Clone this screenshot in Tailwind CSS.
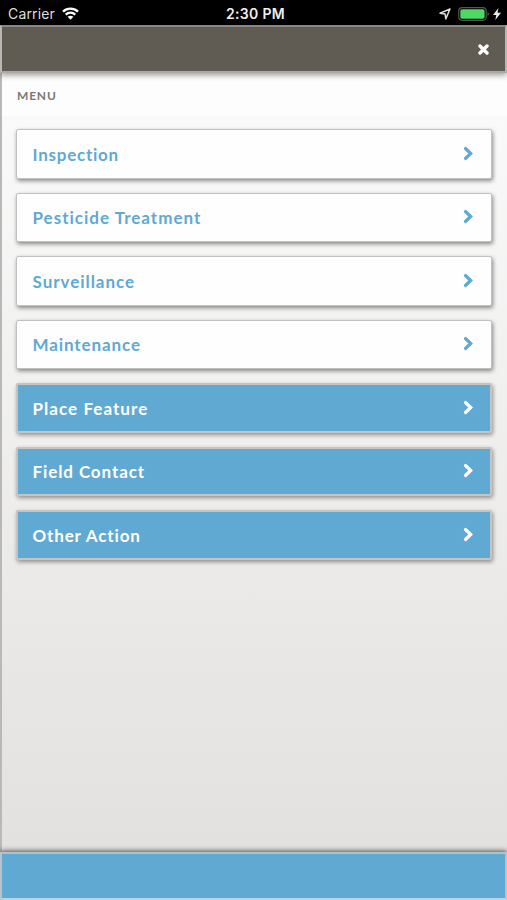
<!DOCTYPE html>
<html lang="en">
<head>
<meta charset="utf-8">
<title>Menu</title>
<script src="https://cdn.jsdelivr.net/npm/@tailwindcss/browser@4"></script>
</head>
<body class="w-[507px] h-[900px] overflow-hidden flex flex-col bg-black font-['Lato',sans-serif]">
<div class="h-[25px] shrink-0 grid grid-cols-[1fr_auto_1fr] items-center bg-black text-white font-['Inter',sans-serif] text-[14px] leading-[25px] pt-px">
  <div class="flex items-center pl-[8px] gap-[6px] text-[#dedede]">
    <span class="w-[48px] whitespace-nowrap tracking-[0.15px]">Carrier</span>
    <svg class="w-[17px] h-[13px]" viewBox="0 0 17 13" fill="none" stroke="#fff" stroke-width="2.3"><path d="M1 4.7C5.3.7 11.7.7 16 4.7M3.7 7.6c2.8-2.5 6.800-2.500 9.600 0"/><path d="M8.500 12.700 5.600 9.800c1.700-1.500 4.100-1.500 5.800 0z" fill="#fff" stroke="none"/></svg>
  </div>
  <span class="font-semibold text-[#eee] tracking-[0.3px] pl-[4px]">2:30 PM</span>
  <div class="flex items-center justify-end pr-[6px]">
    <svg class="w-[12px] h-[12px] mr-[7px]" viewBox="0 0 12 12" fill="none" stroke="#ddd" stroke-width="1.500" stroke-linejoin="round"><path d="M11 1 6.800 10.900 6.100 5.900 1 5.200z"/></svg>
    <svg class="w-[31px] h-[14px] mr-[4px]" viewBox="0 0 31 14"><rect x=".7" y=".7" width="27.500" height="12.600" rx="3.500" fill="#000" stroke="#555" stroke-width="1.200"/><rect x="2.300" y="2.300" width="24.300" height="9.400" rx="1.800" fill="#4cd964"/><path d="M29.500 4.800q1.400.7 1.400 2.200t-1.400 2.200z" fill="#555"/></svg>
    <svg class="w-[8px] h-[12px]" viewBox="0 0 8 12" fill="#eee"><path d="M5.400 0 0 7h3.300L2.300 12 8 4.800H4.500z"/></svg>
  </div>
</div>
<div class="relative z-10 h-[48px] shrink-0 flex items-center justify-end pr-[16px] bg-[#605c54] border-2 border-t-[#8b8881] border-x-[#b8b7b3] border-b-[#aaa8a3] shadow-[0_2px_6px_rgba(0,0,0,0.4)]">
  <svg class="w-[11px] h-[11px]" viewBox="0 0 11 11" fill="none" stroke="#fff" stroke-width="3.400" stroke-linecap="round"><path d="m2 2 7 7M9 2 2 9"/></svg>
</div>
<main class="flex-1 min-h-0 border-l-2 border-[#b9b8b6] bg-linear-to-b from-[#fbfbfb] to-[#e2e1df]">
  <h1 class="h-[43px] pl-[15px] pt-[2px] flex items-center bg-[#fdfdfd] text-[12px] font-bold tracking-[0.8px] text-[#7b7874]">MENU</h1>
  <nav class="pt-[13px] pl-[14px] pr-[15px] flex flex-col gap-[14px] text-[17px] font-bold text-[#5fa9d3]">
    <a class="h-[49.500px] px-[15.500px] pt-px flex items-center justify-between bg-[#fefefe] border border-[#c2c1bf] rounded-[2px] shadow-[1px_2px_4px_rgba(0,0,0,0.45)]"><span class="tracking-[0.75px]">Inspection</span><svg class="w-[11px] h-[15px] mr-[2px] mb-[2px]" viewBox="0 0 11 15" fill="none" stroke="currentColor" stroke-width="3.200" stroke-linecap="round"><path d="m2.500 2.500 5.200 5-5.200 5"/></svg></a>
    <a class="h-[49.500px] px-[15.500px] pt-px flex items-center justify-between bg-[#fefefe] border border-[#c2c1bf] rounded-[2px] shadow-[1px_2px_4px_rgba(0,0,0,0.45)]"><span class="tracking-[1px]">Pesticide Treatment</span><svg class="w-[11px] h-[15px] mr-[2px] mb-[2px]" viewBox="0 0 11 15" fill="none" stroke="currentColor" stroke-width="3.200" stroke-linecap="round"><path d="m2.500 2.500 5.200 5-5.200 5"/></svg></a>
    <a class="h-[49.500px] px-[15.500px] pt-px flex items-center justify-between bg-[#fefefe] border border-[#c2c1bf] rounded-[2px] shadow-[1px_2px_4px_rgba(0,0,0,0.45)]"><span class="tracking-[0.96px]">Surveillance</span><svg class="w-[11px] h-[15px] mr-[2px] mb-[2px]" viewBox="0 0 11 15" fill="none" stroke="currentColor" stroke-width="3.200" stroke-linecap="round"><path d="m2.500 2.500 5.200 5-5.200 5"/></svg></a>
    <a class="h-[49.500px] px-[15.500px] pt-px flex items-center justify-between bg-[#fefefe] border border-[#c2c1bf] rounded-[2px] shadow-[1px_2px_4px_rgba(0,0,0,0.45)]"><span class="tracking-[0.9px]">Maintenance</span><svg class="w-[11px] h-[15px] mr-[2px] mb-[2px]" viewBox="0 0 11 15" fill="none" stroke="currentColor" stroke-width="3.200" stroke-linecap="round"><path d="m2.500 2.500 5.200 5-5.200 5"/></svg></a>
    <a class="h-[49.500px] px-[14.500px] pt-px flex items-center justify-between bg-[#60a9d3] text-white border-2 border-[#c3c5c5] rounded-[2px] shadow-[1px_2px_4px_rgba(0,0,0,0.4)]"><span class="tracking-[1.050px]">Place Feature</span><svg class="w-[11px] h-[15px] mr-[2px] mb-[2px]" viewBox="0 0 11 15" fill="none" stroke="currentColor" stroke-width="3.200" stroke-linecap="round"><path d="m2.500 2.500 5.200 5-5.200 5"/></svg></a>
    <a class="h-[49.500px] px-[14.500px] pt-px flex items-center justify-between bg-[#60a9d3] text-white border-2 border-[#c3c5c5] rounded-[2px] shadow-[1px_2px_4px_rgba(0,0,0,0.4)]"><span class="tracking-[0.9px]">Field Contact</span><svg class="w-[11px] h-[15px] mr-[2px] mb-[2px]" viewBox="0 0 11 15" fill="none" stroke="currentColor" stroke-width="3.200" stroke-linecap="round"><path d="m2.500 2.500 5.200 5-5.200 5"/></svg></a>
    <a class="h-[49.500px] px-[14.500px] pt-px flex items-center justify-between bg-[#60a9d3] text-white border-2 border-[#c3c5c5] rounded-[2px] shadow-[1px_2px_4px_rgba(0,0,0,0.4)]"><span class="tracking-[0.85px]">Other Action</span><svg class="w-[11px] h-[15px] mr-[2px] mb-[2px]" viewBox="0 0 11 15" fill="none" stroke="currentColor" stroke-width="3.200" stroke-linecap="round"><path d="m2.500 2.500 5.200 5-5.200 5"/></svg></a>
  </nav>
</main>
<footer class="relative z-10 h-[48px] shrink-0 bg-[#60a9d3] border-2 border-x-[#b7c3c9] border-t-[#b5c1c4] border-b-[#bdd4e1] shadow-[0_-1px_5px_rgba(0,0,0,0.65)]"></footer>
</body>
</html>
